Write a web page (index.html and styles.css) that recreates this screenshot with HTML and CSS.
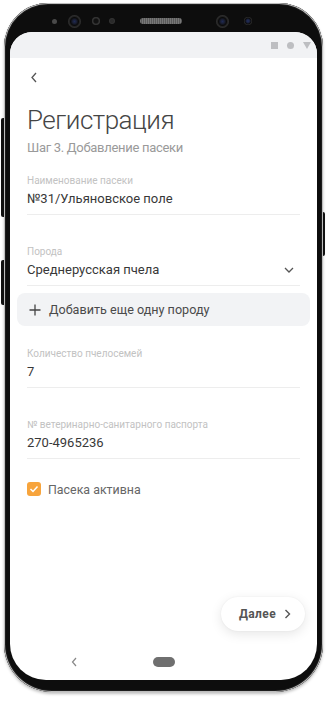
FILE: index.html
```html
<!DOCTYPE html>
<html lang="ru">
<head>
<meta charset="utf-8">
<title>Регистрация</title>
<link rel="stylesheet" href="styles.css">
</head>
<body>
<div class="phone">
  <span class="side-btn side-left-1"></span>
  <span class="side-btn side-left-2"></span>
  <span class="side-btn side-right"></span>
  <div class="bezel-top">
    <span class="dot d1"></span>
    <span class="cam c1"></span>
    <span class="dot d2"></span>
    <span class="dot d3"></span>
    <span class="speaker"></span>
    <span class="cam c2"></span>
    <span class="dot d4"></span>
  </div>
  <div class="screen">
    <div class="statusbar">
      <span class="st-square"></span>
      <span class="st-circle"></span>
      <svg class="st-tri" width="8" height="7" viewBox="0 0 8 7"><path d="M0 0H8L4 7Z" fill="#bdbec1"/></svg>
    </div>
    <div class="content">
      <div class="topbar">
        <svg class="back" width="8" height="11" viewBox="0 0 8 11"><path d="M6 1L2 5.5L6 10" fill="none" stroke="#555" stroke-width="1.3"/></svg>
      </div>
      <h1 class="title">Регистрация</h1>
      <p class="subtitle">Шаг 3. Добавление пасеки</p>

      <div class="field first">
        <div class="label">Наименование пасеки</div>
        <div class="value">№31/Ульяновское поле</div>
      </div>

      <div class="field select">
        <div class="label">Порода</div>
        <div class="value row">
          <span>Среднерусская пчела</span>
          <svg class="chev" width="10" height="6" viewBox="0 0 10 6"><path d="M1 1L5 5L9 1" fill="none" stroke="#555" stroke-width="1.3"/></svg>
        </div>
      </div>

      <div class="add-btn">
        <svg class="plus" width="12" height="12" viewBox="0 0 12 12"><path d="M6 0.5V11.5M0.5 6H11.5" stroke="#444" stroke-width="1.3"/></svg>
        <span>Добавить еще одну породу</span>
      </div>

      <div class="field after-btn">
        <div class="label">Количество пчелосемей</div>
        <div class="value">7</div>
      </div>

      <div class="field">
        <div class="label">№ ветеринарно-санитарного паспорта</div>
        <div class="value">270-4965236</div>
      </div>

      <label class="check">
        <span class="box"><svg width="10" height="8" viewBox="0 0 10 8"><path d="M1.5 4L4 6.5L8.5 1.5" fill="none" stroke="#fff" stroke-width="1.5"/></svg></span>
        <span class="check-text">Пасека активна</span>
      </label>

      <div class="footer">
        <button class="next">Далее
          <svg width="7" height="10" viewBox="0 0 7 10"><path d="M1.5 1L5.5 5L1.5 9" fill="none" stroke="#555" stroke-width="1.4"/></svg>
        </button>
      </div>
    </div>
    <div class="navbar">
      <svg class="nav-back" width="6" height="10" viewBox="0 0 6 10"><path d="M5 1L1.5 5L5 9" fill="none" stroke="#888" stroke-width="1.2"/></svg>
      <span class="nav-home"></span>
    </div>
  </div>
</div>
</body>
</html>
```

FILE: styles.css
```css
* { box-sizing: border-box; }
html, body { margin: 0; padding: 0; background: #fff; }
body {
  width: 327px;
  height: 701px;
  overflow: hidden;
  font-family: Roboto, "Noto Sans", sans-serif;
  padding: 3px 0 0 4px;
}
.phone {
  position: relative;
  width: 319px;
  height: 689px;
  background: #0d0d0d;
  border-radius: 44px 44px 48px 48px;
  box-shadow: 0 0 0 1px #bdbdbd inset, 0 0 0 2px #1c1c1c inset, 0 2px 3px rgba(0,0,0,0.25);
  display: flex;
  flex-direction: column;
  padding: 0 6px 12px 6px;
}
.side-btn { position: absolute; background: #111; }
.side-left-1 { left: -3px; top: 115px; width: 3px; height: 99px; border-radius: 2px 0 0 2px; }
.side-left-2 { left: -3px; top: 257px; width: 3px; height: 45px; border-radius: 2px 0 0 2px; }
.side-right { right: -2px; top: 209px; width: 2px; height: 44px; border-radius: 0 2px 2px 0; }

.bezel-top {
  height: 29px;
  flex: none;
  display: flex;
  align-items: center;
  padding-top: 7px;
}
.dot { border-radius: 50%; background: #2c2c2c; flex: none; }
.d1 { width: 5px; height: 5px; background: #4a4a4a; margin-left: 42px; }
.cam {
  width: 13px; height: 13px; border-radius: 50%; flex: none;
  background: radial-gradient(circle at 50% 50%, #1f2a55 0, #1a1f33 2px, #0a0a0a 4px, #222 5px, #333 6.5px);
}
.c1 { margin-left: 11px; }
.d2 { width: 8px; height: 8px; margin-left: 11px; background: radial-gradient(circle, #111 0, #111 2px, #2f2f2f 3px, #3a3a3a 4px); }
.d3 { width: 4px; height: 4px; margin-left: 10px; background: #2a2a2a; box-shadow: 0 0 0 1px #333; }
.speaker {
  width: 42px; height: 6px; border-radius: 3px; margin-left: 26px; flex: none;
  background: repeating-linear-gradient(90deg, #777 0, #777 1px, #5a5a5a 1px, #5a5a5a 2px);
}
.c2 { margin-left: 34px; }
.d4 { width: 8px; height: 8px; margin-left: 15px; background: radial-gradient(circle, #23305e 0, #1c2444 1.5px, #0c0c0c 3px, #333 4px); }

.screen {
  flex: 1;
  background: #fff;
  border-radius: 22px 22px 36px 36px;
  overflow: hidden;
  display: flex;
  flex-direction: column;
}
.statusbar {
  height: 26px;
  flex: none;
  background: #f1f2f4;
  display: flex;
  align-items: center;
  justify-content: flex-end;
  gap: 9px;
  padding: 1px 6px 0 0;
}
.st-square { width: 7px; height: 7px; background: #bdbec1; }
.st-circle { width: 7px; height: 7px; border-radius: 50%; background: #bdbec1; }
.st-tri { display: block; }

.content {
  flex: 1;
  display: flex;
  flex-direction: column;
  padding: 0 17px;
}
.topbar {
  height: 38px;
  display: flex;
  align-items: center;
  padding-left: 3px;
}
.back { display: block; }
.title {
  margin: 7px 0 0;
  font-size: 26px;
  line-height: 34px;
  font-weight: 300;
  letter-spacing: -0.5px;
  color: #454545;
}
.subtitle {
  margin: 2px 0 0;
  font-size: 13px;
  line-height: 18px;
  letter-spacing: -0.3px;
  color: #9a9a9a;
}
.field {
  margin-top: 30px;
  border-bottom: 1px solid #ededed;
  padding-bottom: 4px;
}
.field.first { margin-top: 17px; }
.field.after-btn { margin-top: 21px; }
.label {
  font-size: 10px;
  line-height: 14px;
  color: #c2c2c2;
}
.value {
  font-size: 13px;
  line-height: 22px;
  color: #383838;
}
.row {
  display: flex;
  align-items: center;
  justify-content: space-between;
  padding-right: 6px;
}
.chev { display: block; }
.add-btn {
  margin: 7px -10px 0;
  height: 33px;
  border-radius: 8px;
  background: #f2f3f5;
  display: flex;
  align-items: center;
  gap: 8px;
  padding-left: 12px;
  font-size: 12.6px;
  color: #4a4a4a;
}
.plus { display: block; }
.check {
  margin-top: 21px;
  display: flex;
  align-items: center;
  gap: 7px;
  height: 18px;
}
.box {
  width: 14px; height: 14px;
  border-radius: 3px;
  background: #f7a43c;
  display: flex;
  align-items: center;
  justify-content: center;
}
.box svg { display: block; }
.check-text {
  font-size: 12.4px;
  color: #666;
}
.footer {
  margin-top: auto;
  display: flex;
  justify-content: flex-end;
  padding-bottom: 13px;
  margin-right: -5px;
}
.next {
  width: 84px;
  height: 34px;
  border: none;
  border-radius: 17px;
  background: #fff;
  box-shadow: 0 3px 12px rgba(0,0,0,0.10), 0 0 2px rgba(0,0,0,0.06);
  font-family: Roboto, sans-serif;
  font-weight: 700;
  font-size: 12px;
  letter-spacing: 0.4px;
  color: #555;
  display: flex;
  align-items: center;
  justify-content: center;
  gap: 8px;
  padding: 0 0 0 4px;
}
.next svg { display: block; }
.navbar {
  height: 36px;
  flex: none;
  display: flex;
  align-items: center;
  padding-left: 61px;
}
.nav-back { display: block; }
.nav-home {
  width: 22px; height: 10px;
  border-radius: 5px;
  background: #6f6f6f;
  margin-left: 76px;
}
```
